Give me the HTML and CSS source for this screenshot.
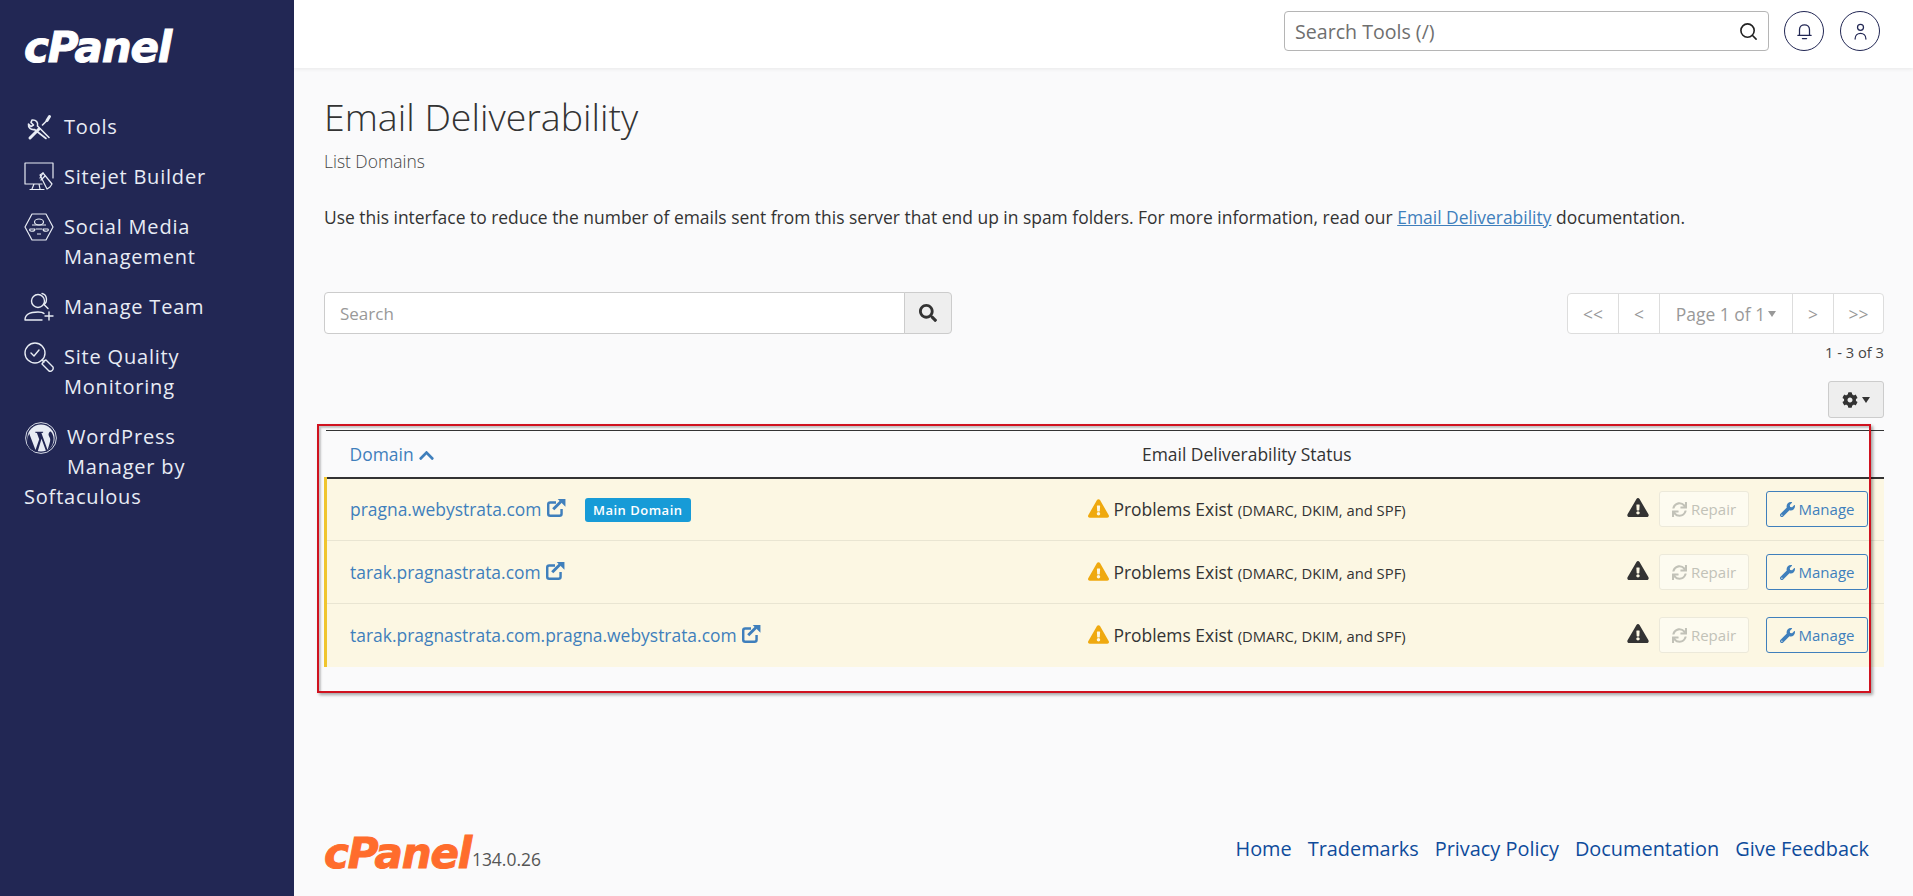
FILE: index.html
```html
<!DOCTYPE html>
<html lang="en">
<head>
<meta charset="utf-8">
<title>Email Deliverability - cPanel</title>
<link rel="stylesheet" href="styles.css">
</head>
<body>
<svg class="defs" aria-hidden="true">
  <symbol id="i-search" viewBox="0 0 512 512"><path d="M505 442.7L405.3 343c-4.5-4.5-10.6-7-17-7H372c27.6-35.3 44-79.7 44-128C416 93.1 322.9 0 208 0S0 93.1 0 208s93.1 208 208 208c48.3 0 92.7-16.4 128-44v16.3c0 6.4 2.5 12.5 7 17l99.7 99.7c9.4 9.4 24.6 9.4 33.9 0l28.3-28.3c9.4-9.4 9.4-24.6.1-34zM208 336c-70.7 0-128-57.2-128-128 0-70.7 57.2-128 128-128 70.7 0 128 57.2 128 128 0 70.7-57.2 128-128 128z"/></symbol>
  <symbol id="i-warn" viewBox="0 0 576 512"><path d="M569.517 440.013C587.975 472.007 564.806 512 527.94 512H48.054c-36.937 0-59.999-40.055-41.577-71.987L246.423 23.985c18.467-32.009 64.72-31.951 83.154 0l239.94 416.028zM288 354c-25.405 0-46 20.595-46 46s20.595 46 46 46 46-20.595 46-46-20.595-46-46-46zm-43.673-165.346l7.418 136c.347 6.364 5.609 11.346 11.982 11.346h48.546c6.373 0 11.635-4.982 11.982-11.346l7.418-136c.375-6.874-5.098-12.654-11.982-12.654h-63.383c-6.884 0-12.356 5.78-11.981 12.654z"/></symbol>
  <symbol id="i-wrench" viewBox="0 0 512 512"><path d="M507.73 109.1c-2.24-9.03-13.54-12.09-20.12-5.51l-74.36 74.36-67.88-11.31-11.31-67.88 74.36-74.36c6.62-6.62 3.43-17.9-5.66-20.16-47.38-11.74-99.55.91-136.58 37.93-39.64 39.64-50.55 97.1-34.05 147.2L18.74 402.76c-24.99 24.99-24.99 65.51 0 90.5 24.99 24.99 65.51 24.99 90.5 0l213.21-213.21c50.12 16.71 107.47 5.68 147.37-34.22 37.07-37.07 49.7-89.32 37.91-136.73zM64 472c-13.25 0-24-10.75-24-24 0-13.26 10.75-24 24-24s24 10.74 24 24c0 13.25-10.75 24-24 24z"/></symbol>
  <symbol id="i-sync" viewBox="0 0 512 512"><path d="M440.65 12.57l4 82.77A247.16 247.16 0 0 0 255.83 8C134.73 8 33.91 94.92 12.29 209.82A12 12 0 0 0 24.09 224h49.05a12 12 0 0 0 11.67-9.26 175.91 175.91 0 0 1 317-56.94l-101.46-4.86a12 12 0 0 0-12.57 12v47.41a12 12 0 0 0 12 12H500a12 12 0 0 0 12-12V12a12 12 0 0 0-12-12h-47.37a12 12 0 0 0-11.98 12.57zM255.83 432a175.61 175.61 0 0 1-146-77.8l101.8 4.87a12 12 0 0 0 12.57-12v-47.4a12 12 0 0 0-12-12H12a12 12 0 0 0-12 12V500a12 12 0 0 0 12 12h47.35a12 12 0 0 0 12-12.6l-4.15-82.57A247.17 247.17 0 0 0 255.83 504c121.11 0 221.93-86.92 243.55-201.82a12 12 0 0 0-11.8-14.18h-49.05a12 12 0 0 0-11.67 9.26A175.86 175.86 0 0 1 255.83 432z"/></symbol>
  <symbol id="i-cog" viewBox="0 0 512 512"><path d="M487.4 315.7l-42.6-24.6c4.3-23.2 4.3-47 0-70.2l42.6-24.6c4.9-2.8 7.1-8.6 5.5-14-11.1-35.6-30-67.8-54.7-94.6-3.8-4.1-10-5.1-14.8-2.3L380.8 110c-17.9-15.4-38.5-27.3-60.8-35.1V25.8c0-5.6-3.9-10.5-9.4-11.7-36.7-8.2-74.3-7.8-109.2 0-5.5 1.2-9.4 6.1-9.4 11.7V75c-22.2 7.9-42.8 19.8-60.8 35.1L88.7 85.5c-4.9-2.8-11-1.9-14.8 2.3-24.7 26.7-43.6 58.9-54.7 94.6-1.7 5.4.6 11.2 5.5 14L67.3 221c-4.3 23.2-4.3 47 0 70.2l-42.6 24.6c-4.9 2.8-7.1 8.6-5.5 14 11.1 35.6 30 67.8 54.7 94.6 3.8 4.1 10 5.1 14.8 2.3l42.6-24.6c17.9 15.4 38.5 27.3 60.8 35.1v49.2c0 5.6 3.9 10.5 9.4 11.7 36.7 8.2 74.3 7.8 109.2 0 5.5-1.2 9.4-6.1 9.4-11.7v-49.2c22.2-7.9 42.8-19.8 60.8-35.1l42.6 24.6c4.9 2.8 11 1.9 14.8-2.3 24.7-26.7 43.6-58.9 54.7-94.6 1.5-5.5-.7-11.3-5.6-14.1zM256 336c-44.1 0-80-35.9-80-80s35.9-80 80-80 80 35.9 80 80-35.9 80-80 80z"/></symbol>
  <symbol id="i-up" viewBox="0 0 448 512"><path d="M240.971 130.524l194.343 194.343c9.373 9.373 9.373 24.569 0 33.941l-22.667 22.667c-9.357 9.357-24.522 9.375-33.901.04L224 227.495 69.255 381.516c-9.379 9.335-24.544 9.317-33.901-.04l-22.667-22.667c-9.373-9.373-9.373-24.569 0-33.941L207.03 130.525c9.372-9.373 24.568-9.373 33.941-.001z"/></symbol>
  <symbol id="i-ext" viewBox="0 0 18 18"><path d="M14 10v4.200c0 1-.8 1.800-1.800 1.800H3.800C2.800 16 2 15.200 2 14.200V5.800C2 4.800 2.800 4 3.800 4H9" fill="none" stroke="currentColor" stroke-width="2.200"/><path d="M6.500 10.200l7-7" fill="none" stroke="currentColor" stroke-width="2.600"/><path d="M10.500 .8H17.500V7.800z"/></symbol>
</svg>

<aside class="sidebar">
  <div class="logo logo-white">cPanel</div>
  <nav class="side-nav">
    <a class="side-item" href="#">
      <svg class="side-icon" viewBox="0 0 30 30" fill="none" stroke="currentColor" stroke-linecap="round" stroke-linejoin="round"><path d="M6 26l9-9" stroke-width="3"/><path d="M18.500 13l5-5" stroke-width="1.600"/><path d="M23 8.500l2.500-4" stroke-width="3"/><path d="M25 25.500L13.500 14c1-3.500-1.500-6.500-5.500-6l-1 2.500 2.500 2.500-2.500 1.500-2.500-2.500c-.5 4 2.500 6 6 5.500L22 26.500" stroke-width="1.600"/></svg>
      <span>Tools</span>
    </a>
    <a class="side-item" href="#">
      <svg class="side-icon" viewBox="0 0 30 30" fill="none" stroke="currentColor" stroke-width="1.200" stroke-linecap="round" stroke-linejoin="round"><path d="M1 22V1h28v15M1 22h17M10 22l-2 5M15 22l1 5M6 27.500h14"/><path d="M16 13l3-2 9 11-2 3-3 2z"/><path d="M19 11l-3 5M21 14l-4 4"/></svg>
      <span>Sitejet Builder</span>
    </a>
    <a class="side-item" href="#">
      <svg class="side-icon" viewBox="0 0 30 30" fill="none" stroke="currentColor" stroke-width="1.200" stroke-linejoin="round"><path d="M8 2h14l7 13-7 13H8L1 15z"/><ellipse cx="15" cy="10" rx="4.500" ry="3"/><path d="M8 13h14M6 17h5c0 3-7 3-5 0zM19 17h5c2 3-5 3-5 0zM12 17h6M13 22h4"/></svg>
      <span>Social Media Management</span>
    </a>
    <a class="side-item" href="#">
      <svg class="side-icon" viewBox="0 0 30 30" fill="none" stroke="currentColor" stroke-width="1.400" stroke-linecap="round"><circle cx="14" cy="9" r="6.500"/><path d="M18 1.500c5 1 6 8 2 11l4 4M1 28c0-7 7-8 13-8 3 0 5 .5 6 1.500M1 28h17M25 20v8M21 24h8"/></svg>
      <span>Manage Team</span>
    </a>
    <a class="side-item" href="#">
      <svg class="side-icon" viewBox="0 0 30 30" fill="none" stroke="currentColor" stroke-width="1.400" stroke-linecap="round" stroke-linejoin="round"><circle cx="11" cy="11" r="10"/><path d="M7 11l3 3 5-6M18 18l2 2M20 19l-2 3 7 7c2 1 5-1 4-4l-7-7z"/></svg>
      <span>Site Quality Monitoring</span>
    </a>
    <a class="side-item side-item-float" href="#">
      <svg class="side-icon-wp" viewBox="0 0 32 32"><circle cx="16" cy="16" r="15.400" fill="none" stroke="currentColor" stroke-width=".9"/><circle cx="16" cy="16" r="13.600" fill="currentColor"/><path d="M4.200 11.500L10.500 28l3.700-10.800-2.300-6.200-1.600-.2v-1h7.800v1l-1.700.2 6.200 17 2-6.800c.9-3 .9-4.400-.2-6.300-.9-1.600-1.200-3-.4-4.200.4-.6 1-1 1.900-1.100 2.400 3 3.200 6.400 2.500 10-.8 4.300-3.300 7.500-7.300 9.600l-4.600-12.500-3.900 13.200c-2.800-.3-5.200-1.300-7.200-3.200-4-3.700-4.500-9.900-.4-16.200z" fill="#222754"/></svg>
      WordPress Manager by Softaculous
    </a>
  </nav>
</aside>

<div class="main">
  <header class="topbar">
    <div class="tool-search">
      <span class="tool-search-text">Search Tools (/)</span>
      <svg class="tool-search-icon" viewBox="0 0 20 20" fill="none" stroke="currentColor" stroke-width="1.700" stroke-linecap="round"><circle cx="9" cy="9" r="7"/><path d="M14 14l4 4"/></svg>
    </div>
    <button class="round-btn" type="button" aria-label="Notifications">
      <svg class="round-icon" viewBox="0 0 18 20" fill="none" stroke="currentColor" stroke-width="1.500" stroke-linecap="round"><path d="M1 14.500h16M3 14.500V8c0-8 12-8 12 0v6.500M6.500 18.500h5"/></svg>
    </button>
    <button class="round-btn" type="button" aria-label="Account">
      <svg class="round-icon" viewBox="0 0 18 20" fill="none" stroke="currentColor" stroke-width="1.500" stroke-linecap="round"><circle cx="9" cy="5" r="3.600"/><path d="M2.500 19c0-9 13-9 13 0"/></svg>
    </button>
  </header>

  <main class="content">
    <h1 class="page-title">Email Deliverability</h1>
    <p class="page-sub">List Domains</p>
    <p class="page-desc">Use this interface to reduce the number of emails sent from this server that end up in spam folders. For more information, read our <a href="#">Email Deliverability</a> documentation.</p>

    <div class="controls">
      <div class="search-group">
        <div class="search-input">Search</div>
        <button class="search-btn" type="button"><svg class="icon-16" aria-hidden="true"><use href="#i-search"/></svg></button>
      </div>
      <div class="paging">
        <div class="pager">
          <span class="pager-cell pager-s">&lt;&lt;</span>
          <span class="pager-cell pager-xs">&lt;</span>
          <span class="pager-cell pager-page">Page 1 of 1<i class="caret"></i></span>
          <span class="pager-cell pager-xs">&gt;</span>
          <span class="pager-cell pager-s">&gt;&gt;</span>
        </div>
        <div class="count">1 - 3 of 3</div>
        <button class="gear-btn" type="button"><svg class="icon-15" aria-hidden="true"><use href="#i-cog"/></svg><i class="caret caret-dark"></i></button>
      </div>
    </div>

    <div class="table-wrap">
      <table class="domains">
        <colgroup><col class="col-domain"><col class="col-status"><col class="col-actions"></colgroup>
        <thead>
          <tr>
            <th class="th-domain"><a href="#">Domain <svg class="icon-up" aria-hidden="true"><use href="#i-up"/></svg></a></th>
            <th class="th-status">Email Deliverability Status</th>
            <th></th>
          </tr>
        </thead>
        <tbody>
          <tr>
            <td class="td-domain"><a href="#">pragna.webystrata.com <svg class="icon-ext" aria-hidden="true"><use href="#i-ext"/></svg></a><span class="badge">Main Domain</span></td>
            <td class="td-status"><svg class="icon-warn" aria-hidden="true"><use href="#i-warn"/></svg> Problems Exist <small>(DMARC, DKIM, and SPF)</small></td>
            <td class="td-actions"><div class="actions"><svg class="icon-alert" aria-hidden="true"><use href="#i-warn"/></svg><span class="btn btn-off"><svg class="icon-13" aria-hidden="true"><use href="#i-sync"/></svg>Repair</span><a class="btn btn-manage" href="#"><svg class="icon-14" aria-hidden="true"><use href="#i-wrench"/></svg>Manage</a></div></td>
          </tr>
          <tr>
            <td class="td-domain"><a href="#">tarak.pragnastrata.com <svg class="icon-ext" aria-hidden="true"><use href="#i-ext"/></svg></a></td>
            <td class="td-status"><svg class="icon-warn" aria-hidden="true"><use href="#i-warn"/></svg> Problems Exist <small>(DMARC, DKIM, and SPF)</small></td>
            <td class="td-actions"><div class="actions"><svg class="icon-alert" aria-hidden="true"><use href="#i-warn"/></svg><span class="btn btn-off"><svg class="icon-13" aria-hidden="true"><use href="#i-sync"/></svg>Repair</span><a class="btn btn-manage" href="#"><svg class="icon-14" aria-hidden="true"><use href="#i-wrench"/></svg>Manage</a></div></td>
          </tr>
          <tr>
            <td class="td-domain"><a href="#">tarak.pragnastrata.com.pragna.webystrata.com <svg class="icon-ext" aria-hidden="true"><use href="#i-ext"/></svg></a></td>
            <td class="td-status"><svg class="icon-warn" aria-hidden="true"><use href="#i-warn"/></svg> Problems Exist <small>(DMARC, DKIM, and SPF)</small></td>
            <td class="td-actions"><div class="actions"><svg class="icon-alert" aria-hidden="true"><use href="#i-warn"/></svg><span class="btn btn-off"><svg class="icon-13" aria-hidden="true"><use href="#i-sync"/></svg>Repair</span><a class="btn btn-manage" href="#"><svg class="icon-14" aria-hidden="true"><use href="#i-wrench"/></svg>Manage</a></div></td>
          </tr>
        </tbody>
      </table>
      <div class="highlight-box"></div>
    </div>
  </main>

  <footer class="footer">
    <div class="footer-brand"><span class="logo logo-orange">cPanel</span><span class="version">134.0.26</span></div>
    <nav class="footer-links">
      <a href="#">Home</a><a href="#">Trademarks</a><a href="#">Privacy Policy</a><a href="#">Documentation</a><a href="#">Give Feedback</a>
    </nav>
  </footer>
</div>
</body>
</html>
```

FILE: styles.css
```css
* { box-sizing: border-box; }
html, body { height: 100%; }
body {
  margin: 0;
  display: flex;
  height: 896px;
  overflow: hidden;
  background: #fafafb;
  color: #333;
  font-family: "Open Sans", "Liberation Sans", sans-serif;
  font-size: 17.450px;
}
a { color: #3f7fbc; text-decoration: none; }
.defs { display: none; }

/* sidebar */
.sidebar {
  width: 294px;
  flex: none;
  background: #222754;
  color: #e8ecf4;
  padding: 28px 50px 0 24px;
}
.logo {
  display: block;
  font-family: "DejaVu Sans", "Open Sans", sans-serif;
  font-weight: 700;
  font-style: italic;
  font-size: 42px;
  line-height: 40px;
  letter-spacing: -1.200px;
  -webkit-text-stroke: 1px currentColor;
}
.logo-white { color: #fff; height: 40px; }
.logo-orange { color: #ff6c2c; }
.side-nav { margin-top: 44px; display: flex; flex-direction: column; gap: 20px; }
.side-item {
  display: flex;
  gap: 10px;
  color: #e8ecf4;
  font-size: 20px;
  line-height: 30px;
  letter-spacing: .8px;
}
.side-icon { width: 30px; height: 30px; flex: none; }
.side-item-float { display: block; }
.side-icon-wp { float: left; width: 32px; height: 32px; margin: 0 10px 0 1px; }

/* top bar */
.main { flex: 1; min-width: 0; display: flex; flex-direction: column; }
.topbar {
  height: 68px;
  flex: none;
  background: #fff;
  box-shadow: 0 1px 4px rgba(0,0,0,.08);
  display: flex;
  align-items: center;
  justify-content: flex-end;
  padding: 0 33px 6px 0;
  gap: 16px;
}
.tool-search {
  width: 485px;
  height: 40px;
  margin-right: -1px;
  border: 1px solid #b5b5b5;
  border-radius: 4px;
  display: flex;
  align-items: center;
  justify-content: space-between;
  padding: 0 10px;
  color: #6f6f6f;
  font-size: 19.600px;
}
.tool-search-icon { width: 19px; height: 19px; color: #222; }
.round-btn {
  width: 40px;
  height: 40px;
  padding: 0;
  border: 1px solid #222754;
  border-radius: 50%;
  background: #fff;
  color: #222754;
  display: flex;
  align-items: center;
  justify-content: center;
}
.round-icon { width: 15px; height: 17px; }

/* content */
.content { flex: 1; padding: 0 29px 0 30px; }
.page-title {
  margin: 24px 0 0;
  font-size: 37.500px;
  line-height: 50px;
  font-weight: 300;
  color: #333;
}
.page-sub { margin: 7px 0 0; font-size: 17.450px; line-height: 24px; font-weight: 300; color: #444; }
.page-desc { margin: 32px 0 0; font-size: 17.450px; line-height: 24px; color: #333; }
.page-desc a { text-decoration: underline; }

.controls { display: flex; justify-content: space-between; margin-top: 63px; height: 138px; align-items: flex-start; }
.search-group { display: flex; width: 628px; height: 42px; }
.search-input {
  flex: 1;
  background: #fff;
  border: 1px solid #ccc;
  border-radius: 4px 0 0 4px;
  padding: 0 15px;
  font-size: 17px;
  line-height: 41px;
  color: #999;
  font-weight: 400;
}
.search-btn {
  width: 48px;
  margin-left: -1px;
  background: #eee;
  border: 1px solid #ccc;
  border-radius: 0 4px 4px 0;
  display: flex;
  align-items: center;
  justify-content: center;
  color: #333;
  padding: 0;
}
.icon-16 { width: 18px; height: 18px; fill: currentColor; }
.icon-15 { width: 16px; height: 16px; fill: currentColor; }
.paging { display: flex; flex-direction: column; align-items: flex-end; margin-top: 1px; }
.pager {
  display: flex;
  height: 41px;
  background: #fff;
  border: 1px solid #ddd;
  border-radius: 4px;
  color: #999;
  font-size: 17.450px;
}
.pager-cell { display: flex; align-items: center; justify-content: center; border-left: 1px solid #ddd; }
.pager-cell:first-child { border-left: 0; }
.pager-s { width: 50px; }
.pager-xs { width: 41px; }
.pager-page { width: 133px; }
.caret {
  display: inline-block;
  width: 0;
  height: 0;
  margin-left: 3px;
  border-top: 6px solid #999;
  border-left: 4.500px solid transparent;
  border-right: 4.500px solid transparent;
}
.caret-dark { border-top-color: #333; margin-left: 4px; }
.count { margin-top: 8px; font-size: 14.700px; line-height: 20px; color: #444; }
.gear-btn {
  margin-top: 19px;
  width: 56px;
  height: 37px;
  background: #eee;
  border: 1px solid #ccc;
  border-radius: 3px;
  color: #333;
  display: flex;
  align-items: center;
  justify-content: center;
  padding: 0;
}

/* table */
.table-wrap { position: relative; }
.domains { width: 100%; table-layout: fixed; border-collapse: collapse; border-top: 1px solid #333; }
.col-domain { width: 584px; }
.col-actions { width: 300px; }
.domains th { height: 47px; font-weight: 400; font-size: 17.450px; border-bottom: 2px solid #333; text-align: left; padding: 0; }
.th-domain { padding-left: 24px !important; }
.th-status { text-align: center !important; }
.domains tbody tr { background: #fcf7e3; border-bottom: 1px solid #e9e5d2; height: 63px; }
.domains tbody tr:last-child { border-bottom: 0; }
.domains td { padding: 0; white-space: nowrap; }
.td-domain { padding-left: 23px !important; border-left: 3px solid #f0c52e; font-size: 17.450px; }
.td-status { text-align: center; font-size: 17.450px; }
.td-status small { font-size: 14.800px; }
.icon-up { width: 17px; height: 17px; fill: currentColor; vertical-align: -3px; }
.icon-ext { width: 20px; height: 20px; fill: currentColor; vertical-align: -2px; }
.icon-warn { width: 21px; height: 19px; fill: #efa90f; vertical-align: -2px; }
.badge {
  display: inline-block;
  margin-left: 19px;
  padding: 0 8px;
  height: 24px;
  line-height: 24px;
  background: #179bd7;
  border-radius: 3px;
  color: #fff;
  font-size: 13px;
  font-weight: 600;
  letter-spacing: .5px;
  vertical-align: 1px;
}
.actions { display: flex; align-items: center; justify-content: flex-end; padding-right: 16px; }
.icon-alert { width: 22px; height: 19px; fill: #333; margin-right: 10px; position: relative; top: -2px; }
.btn {
  display: flex;
  align-items: center;
  justify-content: center;
  gap: 4px;
  height: 36px;
  font-size: 15px;
  border-radius: 3px;
}
.btn-off { width: 90px; color: #c2c2b8; background: #fdfbf0; border: 1px solid #ece9da; margin-right: 17px; }
.btn-manage { width: 102px; color: #3f7fbc; border: 1px solid #3f7fbc; }
.icon-13 { width: 15px; height: 15px; fill: currentColor; }
.icon-14 { width: 15px; height: 15px; fill: currentColor; }
.highlight-box {
  position: absolute;
  left: -7px;
  right: 13px;
  top: -6px;
  height: 269px;
  border: 2px solid #d0121f;
  box-shadow: 2px 2px 3px rgba(0,0,0,.35), inset 2px 2px 2px rgba(0,0,0,.22);
  pointer-events: none;
}

/* footer */
.footer {
  flex: none;
  height: 68px;
  display: flex;
  justify-content: space-between;
  padding: 0 44px 0 30px;
}
.footer-brand { display: flex; align-items: flex-end; height: 46px; }
.version { font-size: 17.450px; color: #555; margin-left: 1px; line-height: 30px; }
.footer-links { display: flex; gap: 16px; font-size: 19.900px; line-height: 30px; margin-top: 6px; }
.footer-links a { color: #0e4b9b; }
```
